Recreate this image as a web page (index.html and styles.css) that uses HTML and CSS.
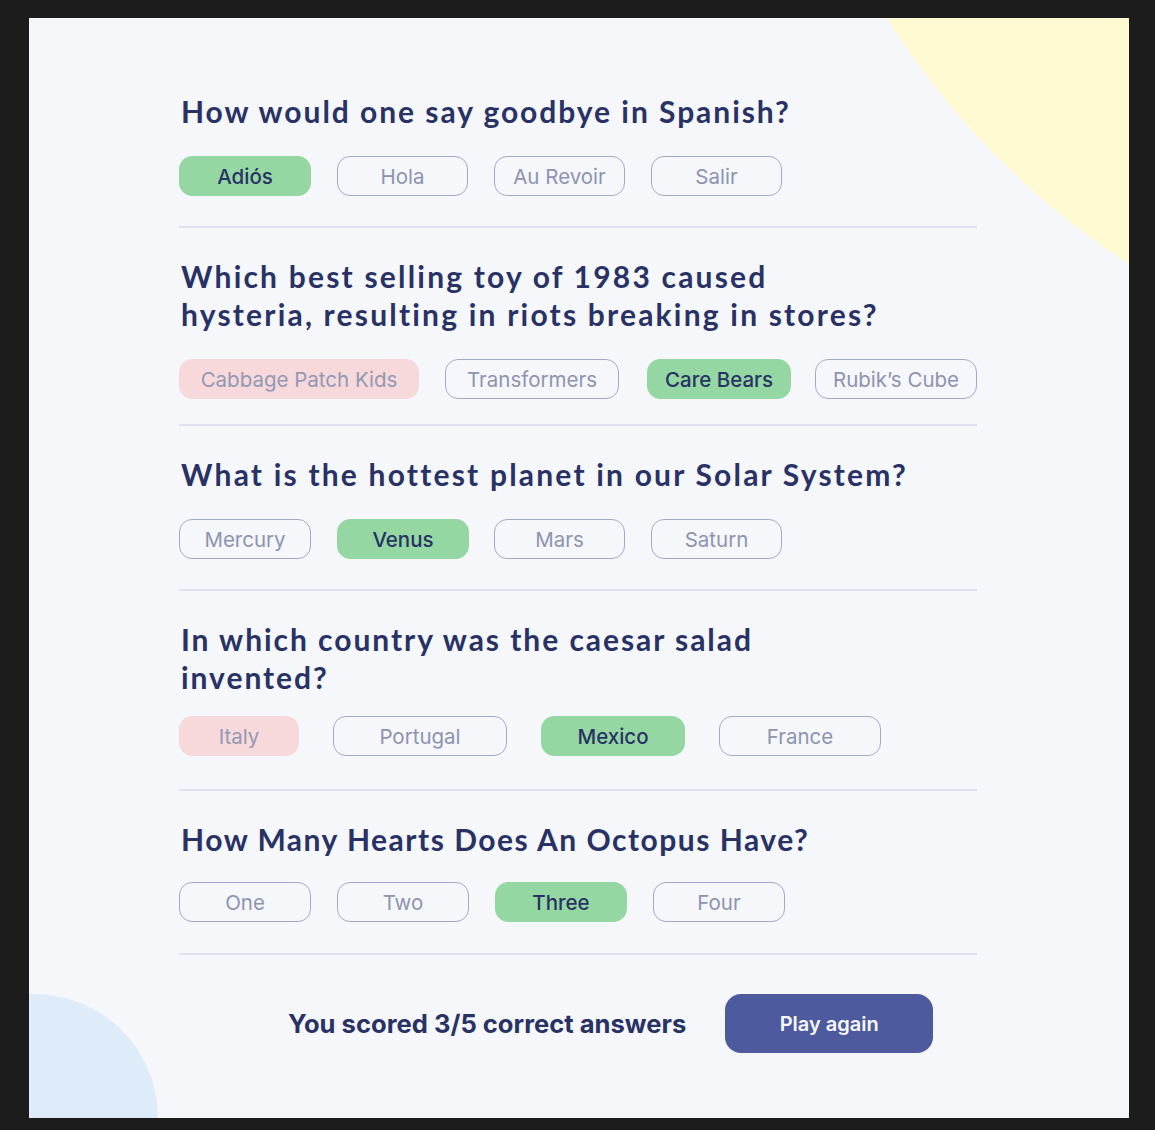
FILE: index.html
```html
<!DOCTYPE html>
<html lang="en">
<head>
<meta charset="utf-8">
<title>Quizzical</title>
<link rel="stylesheet" href="styles.css">
</head>
<body>
<div class="frame">
  <main class="panel">
    <div class="blob blob-yellow"></div>
    <div class="blob blob-blue"></div>
    <div class="quiz">
      <section class="question">
        <h2 class="q-title">How would one say goodbye in Spanish?</h2>
        <div class="answers">
          <button class="answer correct w132">Adiós</button>
          <button class="answer w131">Hola</button>
          <button class="answer w131">Au Revoir</button>
          <button class="answer w131">Salir</button>
        </div>
      </section>
      <section class="question">
        <h2 class="q-title">Which best selling toy of 1983 caused<br>hysteria, resulting in riots breaking in stores?</h2>
        <div class="answers">
          <button class="answer wrong w240">Cabbage Patch Kids</button>
          <button class="answer w174">Transformers</button>
          <button class="answer correct w144">Care Bears</button>
          <button class="answer w162">Rubik’s Cube</button>
        </div>
      </section>
      <section class="question">
        <h2 class="q-title">What is the hottest planet in our Solar System?</h2>
        <div class="answers">
          <button class="answer w132">Mercury</button>
          <button class="answer correct w132">Venus</button>
          <button class="answer w131">Mars</button>
          <button class="answer w131">Saturn</button>
        </div>
      </section>
      <section class="question">
        <h2 class="q-title">In which country was the caesar salad<br>invented?</h2>
        <div class="answers">
          <button class="answer wrong w120">Italy</button>
          <button class="answer w174">Portugal</button>
          <button class="answer correct w144">Mexico</button>
          <button class="answer w162">France</button>
        </div>
      </section>
      <section class="question">
        <h2 class="q-title">How Many Hearts Does An Octopus Have?</h2>
        <div class="answers">
          <button class="answer w132">One</button>
          <button class="answer w132">Two</button>
          <button class="answer correct w132">Three</button>
          <button class="answer w132">Four</button>
        </div>
      </section>
      <div class="result">
        <p class="score">You scored 3/5 correct answers</p>
        <button class="play-again">Play again</button>
      </div>
    </div>
  </main>
</div>
</body>
</html>
```
FILE: styles.css
```css
* { box-sizing: border-box; }

html, body {
  margin: 0;
  padding: 0;
  background: #1c1c1c;
}

.frame {
  padding: 18px 26px 12px 29px;
}

.panel {
  position: relative;
  overflow: hidden;
  width: 1100px;
  height: 1100px;
  background: #f5f7fb;
}

.blob {
  position: absolute;
  border-radius: 50%;
  z-index: 0;
}

.blob-yellow {
  left: 735px;
  top: -1230px;
  width: 1606px;
  height: 1606px;
  background: #fffad1;
}

.blob-blue {
  left: -119px;
  top: 976px;
  width: 248px;
  height: 248px;
  background: #deebf8;
}

.quiz {
  position: relative;
  z-index: 1;
  padding: 74px 0 0 150px;
  width: 948px;
}

.question {
  padding: 29px 0 30px;
  border-bottom: 2px solid #dfe2f0;
}

.question:first-child { padding-top: 0; }
.question:nth-child(2) { padding-bottom: 25px; }
.question:nth-child(4) { padding-bottom: 33px; }
.question:nth-child(4) .answers { margin-top: 20px; }
.question:nth-child(5) { padding-bottom: 31px; }
.question:nth-child(5) .answers { margin-top: 24px; }

.q-title {
  margin: 0;
  font-family: "Lato", "Liberation Sans", sans-serif;
  font-weight: 700;
  font-size: 30px;
  line-height: 38px;
  letter-spacing: 1.95px;
  color: #293264;
  padding-left: 2px;
}

.question:nth-child(2) .q-title,
.question:nth-child(3) .q-title { letter-spacing: 2.2px; }
.question:nth-child(5) .q-title { letter-spacing: 1.5px; }

.answers {
  display: flex;
  gap: 26px;
  margin-top: 26px;
}

.question:nth-child(2) .answers .answer:nth-child(3) { margin-left: 2px; }
.question:nth-child(2) .answers .answer:nth-child(4) { margin-left: -2px; }
.question:nth-child(3) .answers .answer:nth-child(n+3) { margin-left: -1px; margin-right: 1px; }
.question:nth-child(4) .answers { gap: 34px; }

.answer {
  height: 40px;
  padding: 1px 0 0;
  border: 1.5px solid #a4a9cc;
  border-radius: 13px;
  background: transparent;
  font-family: "Inter", "Liberation Sans", sans-serif;
  font-size: 20.5px;
  font-weight: 400;
  color: #8e93b0;
  text-align: center;
}

.answer.correct {
  background: #94d7a2;
  border-color: #94d7a2;
  color: #293264;
  font-weight: 500;
}

.answer.wrong {
  background: #f7d9dc;
  border-color: #f7d9dc;
  color: #9398b3;
}

.w120 { width: 120px; }
.w131 { width: 131px; }
.w132 { width: 132px; }
.w144 { width: 144px; }
.w162 { width: 162px; }
.w174 { width: 174px; }
.w240 { width: 240px; }

.result {
  display: flex;
  align-items: center;
  gap: 39px;
  padding: 39px 0 0 109px;
}

.score {
  margin: 0;
  font-family: "Inter", "Liberation Sans", sans-serif;
  font-weight: 700;
  font-size: 25.6px;
  color: #293264;
}

.play-again {
  width: 208px;
  height: 59px;
  border: none;
  border-radius: 16px;
  background: #4d5b9e;
  color: #f5f7fb;
  font-family: "Inter", "Liberation Sans", sans-serif;
  font-weight: 600;
  font-size: 20px;
}
```
